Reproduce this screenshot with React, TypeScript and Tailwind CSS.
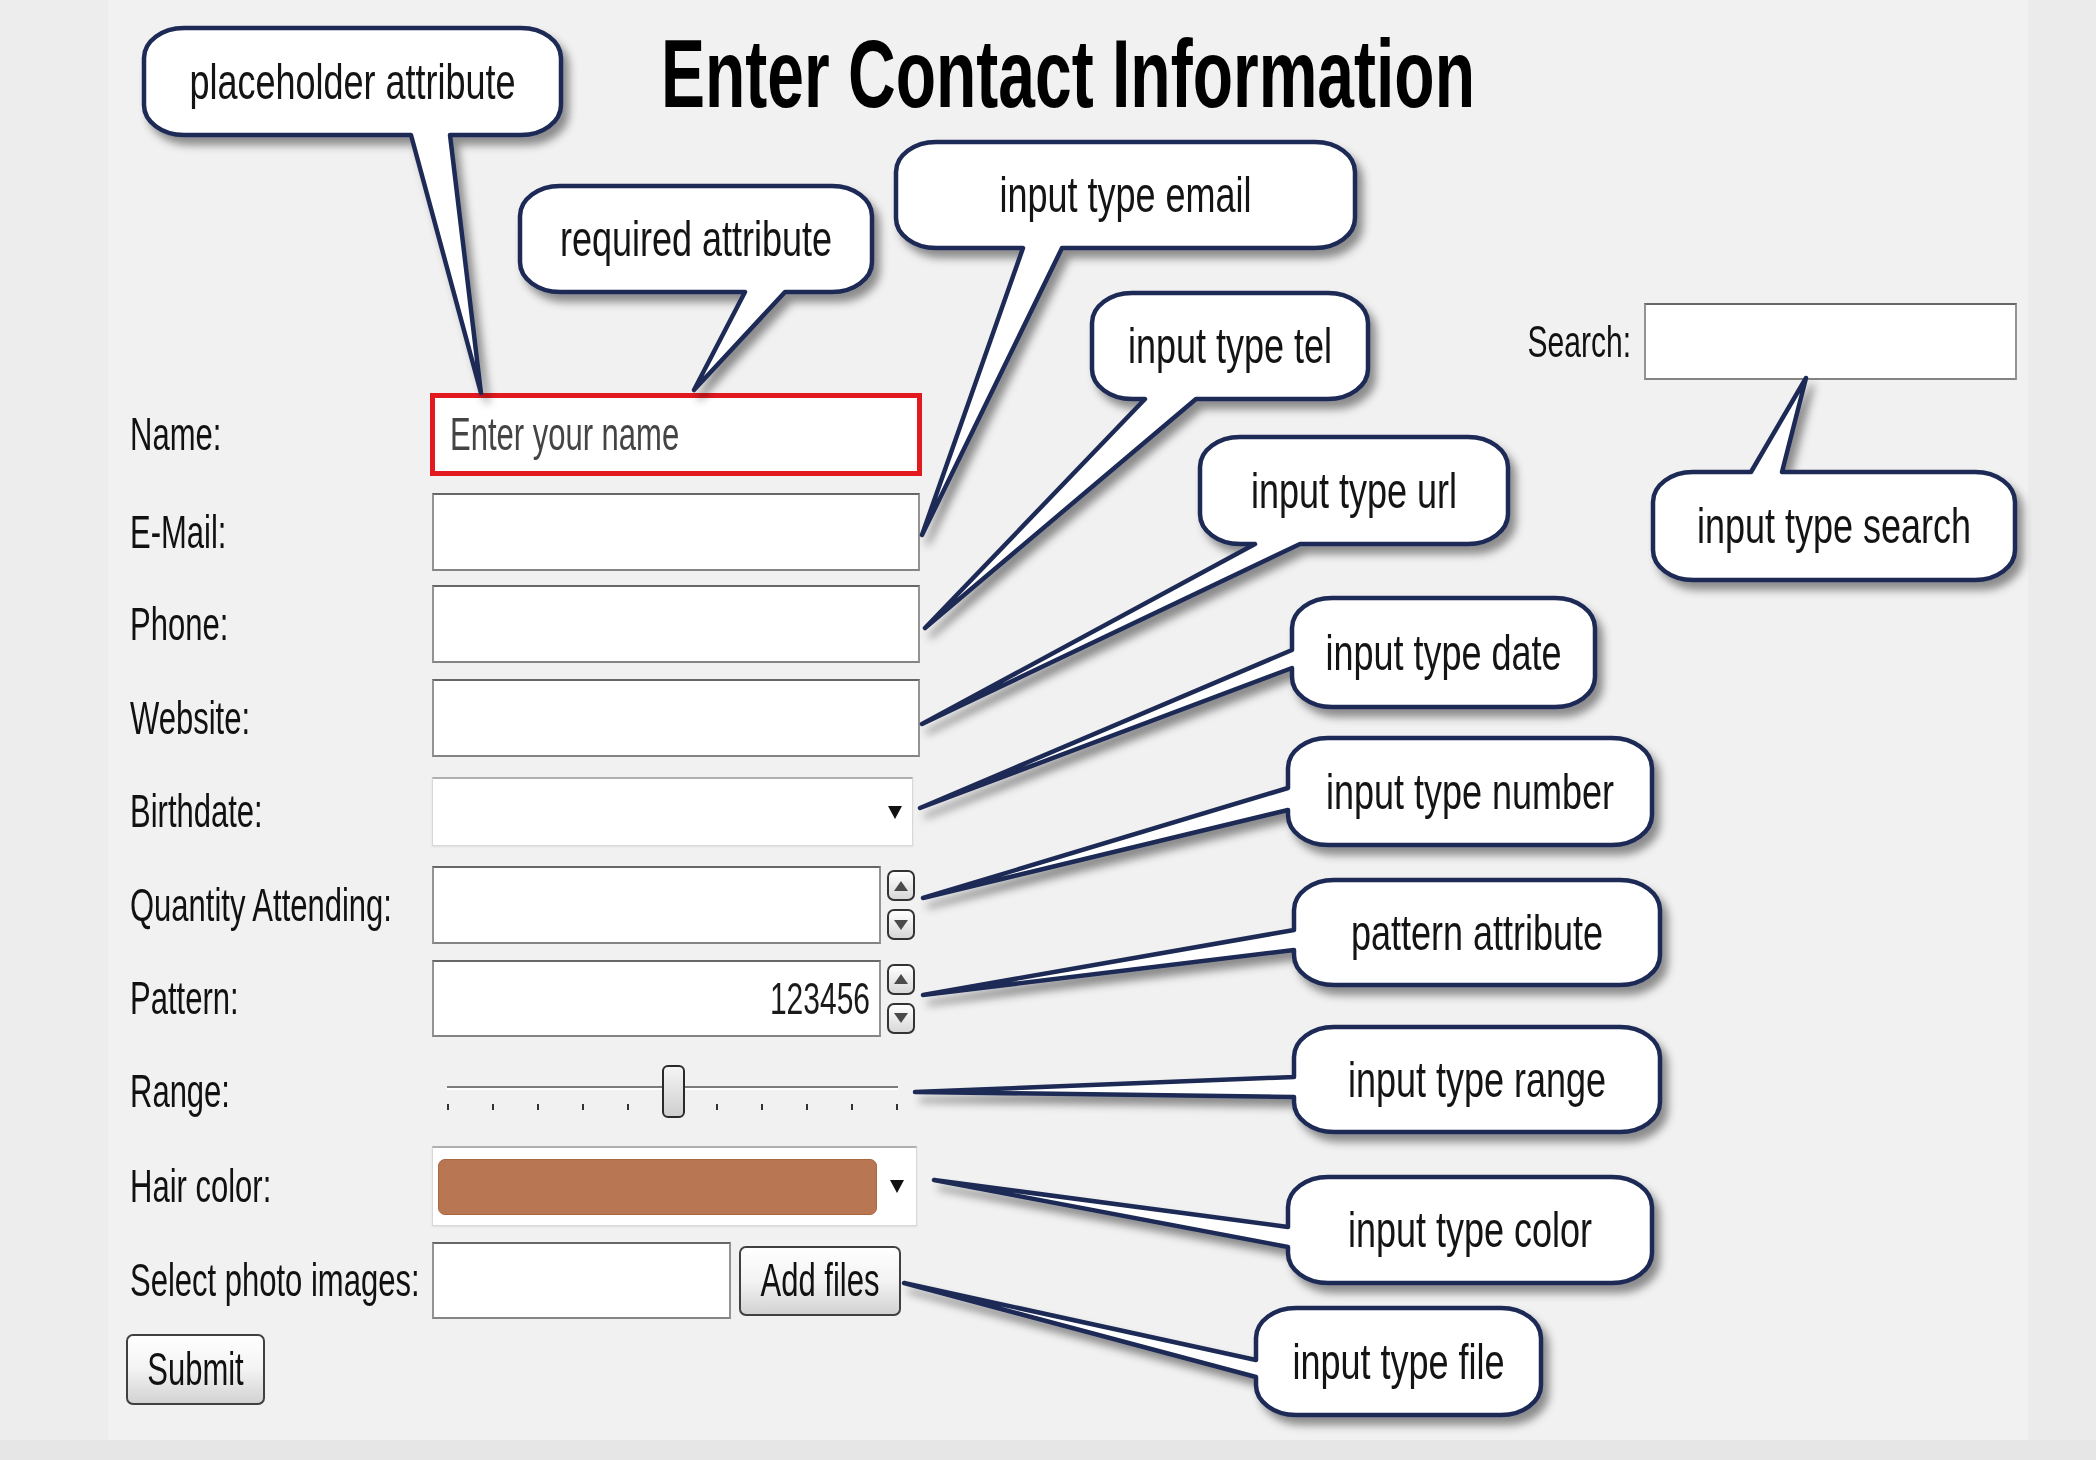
import React from "react";

type Callout = {
  x: number;
  y: number;
  w: number;
  h: number;
  text: string;
  side: "top" | "bottom" | "left";
  a: number;
  b: number;
  tx: number;
  ty: number;
};

const callouts: Callout[] = [
  { x: 144, y: 28, w: 417, h: 107, text: "placeholder attribute", side: "bottom", a: 411, b: 450, tx: 481, ty: 393 },
  { x: 520, y: 186, w: 352, h: 106, text: "required attribute", side: "bottom", a: 745, b: 785, tx: 694, ty: 390 },
  { x: 896, y: 142, w: 459, h: 106, text: "input type email", side: "bottom", a: 1023, b: 1062, tx: 922, ty: 535 },
  { x: 1092, y: 293, w: 276, h: 106, text: "input type tel", side: "bottom", a: 1145, b: 1196, tx: 925, ty: 628 },
  { x: 1200, y: 437, w: 308, h: 107, text: "input type url", side: "bottom", a: 1255, b: 1300, tx: 922, ty: 724 },
  { x: 1292, y: 598, w: 303, h: 109, text: "input type date", side: "left", a: 650, b: 668, tx: 920, ty: 808 },
  { x: 1288, y: 738, w: 364, h: 107, text: "input type number", side: "left", a: 788, b: 810, tx: 923, ty: 898 },
  { x: 1294, y: 880, w: 366, h: 105, text: "pattern attribute", side: "left", a: 930, b: 950, tx: 923, ty: 995 },
  { x: 1294, y: 1027, w: 366, h: 105, text: "input type range", side: "left", a: 1077, b: 1097, tx: 915, ty: 1092 },
  { x: 1288, y: 1177, w: 364, h: 106, text: "input type color", side: "left", a: 1227, b: 1247, tx: 934, ty: 1180 },
  { x: 1256, y: 1308, w: 285, h: 107, text: "input type file", side: "left", a: 1360, b: 1377, tx: 904, ty: 1283 },
  { x: 1653, y: 472, w: 362, h: 108, text: "input type search", side: "top", a: 1751, b: 1782, tx: 1806, ty: 378 },
];

function bubblePath(c: Callout): string {
  const { x, y, w, h } = c;
  const rx = 40;
  const ry = 30;
  const r = x + w;
  const b = y + h;
  let d = `M ${x + rx} ${y}`;
  if (c.side === "top") d += ` L ${c.a} ${y} L ${c.tx} ${c.ty} L ${c.b} ${y}`;
  d += ` L ${r - rx} ${y} A ${rx} ${ry} 0 0 1 ${r} ${y + ry} L ${r} ${b - ry} A ${rx} ${ry} 0 0 1 ${r - rx} ${b}`;
  if (c.side === "bottom") d += ` L ${c.b} ${b} L ${c.tx} ${c.ty} L ${c.a} ${b}`;
  d += ` L ${x + rx} ${b} A ${rx} ${ry} 0 0 1 ${x} ${b - ry}`;
  if (c.side === "left") d += ` L ${x} ${c.b} L ${c.tx} ${c.ty} L ${x} ${c.a}`;
  d += ` L ${x} ${y + ry} A ${rx} ${ry} 0 0 1 ${x + rx} ${y} Z`;
  return d;
}

function T({ children }: { children: React.ReactNode }) {
  return <span className="block leading-none scale-y-[1.5]">{children}</span>;
}

function Label({ children }: { children: React.ReactNode }) {
  return (
    <div className="flex w-[302px] shrink-0 items-center text-[31px] text-[#111]">
      <T>{children}</T>
    </div>
  );
}

function Arrow() {
  return (
    <svg width="14" height="13" viewBox="0 0 14 13" className="block">
      <polygon points="0,0 14,0 7,13" fill="#111" />
    </svg>
  );
}

function Spin({ up }: { up: boolean }) {
  return (
    <div className="flex h-[31px] w-[28px] items-center justify-center rounded-[7px] border-2 border-[#333] bg-linear-to-b from-white to-[#d8d8d8]">
      <svg width="14" height="10" viewBox="0 0 14 10" className="block">
        {up ? (
          <polygon points="7,0 14,10 0,10" fill="#4a4a4a" />
        ) : (
          <polygon points="0,0 14,0 7,10" fill="#4a4a4a" />
        )}
      </svg>
    </div>
  );
}

const box = "bg-white border-2 border-[#939393] border-t-[#676767] border-b-[#848484]";
const lightBox = "bg-white border border-[#d8d8d8] border-t-2 border-t-[#b0b0b0] shadow-[0_1px_2px_rgba(0,0,0,0.08)]";
const btn =
  "flex items-center justify-center rounded-[7px] border-2 border-[#404040] bg-linear-to-b from-white via-[#f3f3f3] to-[#d2d2d2] text-[31px] text-[#111]";

export default function App() {
  const ticks = Array.from({ length: 11 });
  return (
    <div className="relative h-[1460px] w-[2096px] overflow-hidden bg-[#f1f1f1] font-['Liberation_Sans',Arial,sans-serif] text-[#111]">
      <div className="flex h-[1440px]">
        <div className="w-[108px] shrink-0 bg-[#ededed]" />
        <main className="flex flex-1 flex-col">
          <h1 className="mt-[40px] flex h-[66px] justify-center text-[66px] font-bold text-black">
            <span className="block leading-none scale-y-[1.47]">Enter Contact Information</span>
          </h1>
          <div className="flex items-start justify-between pl-[22px] pr-[11px]">
            <div className="mt-[287px] flex flex-col">
              {/* Name */}
              <div className="flex h-[83px] items-center">
                <Label>Name:</Label>
                <div className="-ml-[2px] flex h-[83px] w-[492px] items-center border-[5px] border-[#e2191f] bg-white pl-[15px] text-[31px] text-[#444]">
                  <T>Enter your name</T>
                </div>
              </div>
              {/* E-Mail */}
              <div className="mt-[17px] flex h-[78px] items-center">
                <Label>E-Mail:</Label>
                <div className={`h-[78px] w-[488px] ${box}`} />
              </div>
              {/* Phone */}
              <div className="mt-[14px] flex h-[78px] items-center">
                <Label>Phone:</Label>
                <div className={`h-[78px] w-[488px] ${box}`} />
              </div>
              {/* Website */}
              <div className="mt-[16px] flex h-[78px] items-center">
                <Label>Website:</Label>
                <div className={`h-[78px] w-[488px] ${box}`} />
              </div>
              {/* Birthdate */}
              <div className="mt-[20px] flex h-[69px] items-center">
                <Label>Birthdate:</Label>
                <div className={`flex h-[69px] w-[481px] items-center justify-end pr-[10px] ${lightBox}`}>
                  <Arrow />
                </div>
              </div>
              {/* Quantity */}
              <div className="mt-[20px] flex h-[78px] items-center">
                <Label>Quantity Attending:</Label>
                <div className={`h-[78px] w-[449px] ${box}`} />
                <div className="ml-[6px] flex flex-col gap-[8px]">
                  <Spin up />
                  <Spin up={false} />
                </div>
              </div>
              {/* Pattern */}
              <div className="mt-[16px] flex h-[77px] items-center">
                <Label>Pattern:</Label>
                <div className={`flex h-[77px] w-[449px] items-center justify-end pr-[9px] text-[30px] text-[#1a1a1a] ${box}`}>
                  <T>123456</T>
                </div>
                <div className="ml-[6px] flex flex-col gap-[8px]">
                  <Spin up />
                  <Spin up={false} />
                </div>
              </div>
              {/* Range */}
              <div className="flex h-[109px] items-center">
                <Label>Range:</Label>
                <div className="relative ml-[15px] h-[53px] w-[451px]">
                  <div className="pt-[21px]">
                    <div className="h-[2px] bg-[#7c7c7c]" />
                    <div className="h-[2px] bg-white" />
                  </div>
                  <div className="mt-[14px] flex justify-between">
                    {ticks.map((_, i) => (
                      <div key={i} className="h-[6px] w-[2px] bg-[#333]" />
                    ))}
                  </div>
                  <div className="absolute left-[215px] top-0 h-[53px] w-[23px] rounded-[6px] border-2 border-[#2a2a2a] bg-linear-to-b from-[#f4f4f4] to-[#cfcfcf]" />
                </div>
              </div>
              {/* Hair color */}
              <div className="flex h-[80px] items-center">
                <Label>Hair color:</Label>
                <div className={`flex h-[80px] w-[485px] items-center pl-[5px] ${lightBox}`}>
                  <div className="h-[56px] w-[439px] rounded-[7px] border border-[#a9663f] bg-[#b97652]" />
                  <div className="flex flex-1 justify-center">
                    <Arrow />
                  </div>
                </div>
              </div>
              {/* Select photo images */}
              <div className="mt-[16px] flex h-[77px] items-center">
                <Label>Select photo images:</Label>
                <div className={`h-[77px] w-[299px] ${box}`} />
                <div className={`ml-[8px] h-[70px] w-[162px] ${btn}`}>
                  <T>Add files</T>
                </div>
              </div>
              {/* Submit */}
              <div className="mt-[15px] flex h-[71px] items-center">
                <div className={`-ml-[4px] h-[71px] w-[139px] ${btn}`}>
                  <T>Submit</T>
                </div>
              </div>
            </div>

            {/* Search */}
            <div className="mt-[197px] flex h-[77px] items-center gap-[13px]">
              <div className="text-[30px] text-[#111]">
                <T>Search:</T>
              </div>
              <div className={`h-[77px] w-[373px] ${box}`} />
            </div>
          </div>
        </main>
        <div className="w-[68px] shrink-0 bg-[#ebebeb]" />
      </div>
      <div className="h-[20px] bg-[#e6e6e6]" />

      {/* Callout annotations */}
      <svg
        className="pointer-events-none absolute left-0 top-0"
        width="2096"
        height="1460"
        viewBox="0 0 2096 1460"
      >
        <defs>
          <filter id="sh" x="-10%" y="-10%" width="130%" height="140%">
            <feDropShadow dx="6" dy="8" stdDeviation="4" floodColor="#000" floodOpacity="0.42" />
          </filter>
        </defs>
        {callouts.map((c, i) => (
          <path
            key={i}
            d={bubblePath(c)}
            fill="#ffffff"
            stroke="#1c2a55"
            strokeWidth="4.5"
            strokeLinejoin="round"
            filter="url(#sh)"
          />
        ))}
      </svg>
      {callouts.map((c, i) => (
        <div
          key={i}
          className="pointer-events-none absolute flex items-center justify-center text-[36px] text-[#141414]"
          style={{ left: c.x, top: c.y, width: c.w, height: c.h }}
        >
          <span className="block leading-none scale-y-[1.4]">{c.text}</span>
        </div>
      ))}
    </div>
  );
}
